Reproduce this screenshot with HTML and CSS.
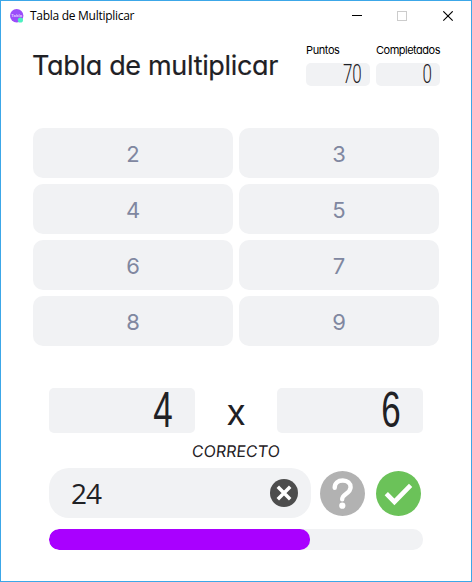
FILE: index.html
```html
<!DOCTYPE html>
<html lang="es">
<head>
<meta charset="utf-8">
<title>Tabla de Multiplicar</title>
<link rel="stylesheet" href="styles.css">
</head>
<body>
<div class="window">
  <header class="titlebar">
    <svg class="logo" width="14" height="14" viewBox="0 0 14 14"><circle cx="6.7" cy="6.8" r="6.7" fill="#9b4dfa"/><text x="6.7" y="7.8" class="logo-text" text-anchor="middle">Tabla</text><circle cx="10.4" cy="11" r="2.6" fill="#4df0c0"/></svg>
    <span class="caption">Tabla de Multiplicar</span>
    <svg class="controls" width="102" height="12" viewBox="0 0 102 12" fill="none"><path d="M0 4.500h10" stroke="#000"/><rect x="45.500" y=".5" width="9" height="9" stroke="#ccc"/><path d="M91.300.3l9.400 9.400m0-9.400l-9.400 9.400" stroke="#000" stroke-width="1.100"/></svg>
  </header>
  <main>
    <section class="heading">
      <h1>Tabla de multiplicar</h1>
      <div class="stat"><span class="label puntos">Puntos</span><div class="score"><span>70</span></div></div>
      <div class="stat"><span class="label">Completados</span><div class="score"><span>0</span></div></div>
    </section>
    <section class="tables">
      <button>2</button><button>3</button>
      <button>4</button><button>5</button>
      <button>6</button><button>7</button>
      <button>8</button><button>9</button>
    </section>
    <section class="game">
      <div class="operation">
        <div class="factor"><span>4</span></div>
        <span class="times">x</span>
        <div class="factor"><span>6</span></div>
      </div>
      <div class="result"><span>CORRECTO</span></div>
      <div class="answer">
        <div class="entry"><span>24</span>
          <svg width="28" height="28" viewBox="0 0 28 28"><circle cx="14" cy="14" r="14" fill="#4d4d4d"/><path d="M7.800 7.800l12.400 12.400m0-12.400l-12.400 12.400" stroke="#fff" stroke-width="3.500"/></svg>
        </div>
        <svg class="help" width="45" height="45" viewBox="0 0 45 45"><circle cx="22.500" cy="22.500" r="22.500" fill="#b2b2b2"/><path d="M14.700 16.800C14.700 12 18 9.500 22.800 9.500c4.800 0 7.800 3 7.800 6.800 0 6.400-8.400 6.400-8.400 12" fill="none" stroke="#fff" stroke-width="4.400" stroke-linecap="round"/><circle cx="22.300" cy="34.700" r="3.100" fill="#fff"/></svg>
        <svg class="check" width="45" height="45" viewBox="0 0 45 45"><circle cx="22.500" cy="22.500" r="22.500" fill="#6bc259"/><path d="M10.300 22.700l8.100 8.200 16.200-16.500" fill="none" stroke="#fff" stroke-width="4.600"/></svg>
      </div>
      <div class="progress"><div class="bar"></div></div>
    </section>
  </main>
</div>
</body>
</html>
```

FILE: styles.css
```css
* { box-sizing: border-box; }
body { margin: 0; background: #fff; color: #1f2125; font-family: Inter, "Open Sans", sans-serif; font-feature-settings: "cv11" 1; }
svg { display: block; flex: none; }
.window { width: 472px; height: 582px; border: 1px solid #3ca7e8; overflow: hidden; }
.titlebar { height: 29px; display: flex; align-items: center; padding: 0 17px 0 9px; }
.logo-text { font: 700 4px "Open Sans", sans-serif; fill: #e0c8ff; }
.caption { margin-left: 6px; font: 12px/16px "Open Sans", sans-serif; letter-spacing: -0.28px; color: #000; white-space: nowrap; }
.controls { margin-left: auto; margin-top: 2px; }
main { padding: 0 31px 0 32px; }
.heading { height: 98px; display: flex; gap: 6px; align-items: flex-start; }
h1 { flex: none; margin: 18px 0 0 -1px; width: 268px; font-size: 27px; line-height: 36px; font-weight: 400; letter-spacing: -0.32px; white-space: nowrap; -webkit-text-stroke: .2px #1f2125; }
.stat { flex: none; width: 64px; padding-top: 12px; }
.label { display: block; height: 21px; font-size: 11px; line-height: 16px; letter-spacing: -0.5px; color: #000; white-space: nowrap; }
.puntos { letter-spacing: -0.4px; }
.score { height: 23px; border-radius: 5px; background: #f1f2f4; display: flex; justify-content: flex-end; align-items: center; padding-right: 8px; font: 300 25px/23px Roboto, "Liberation Sans", sans-serif; }
.score span { transform: scaleX(.68); transform-origin: right; }
.tables { display: grid; grid-template-columns: 200px 200px; grid-auto-rows: 50px; gap: 6px; }
button { border: 0; border-radius: 10px; background: #f1f2f4; color: #8087a0; font: 22px/30px Inter, sans-serif; padding: 2px 0 0; }
.game { width: 374px; margin: 42px 0 0 16px; }
.operation { display: grid; grid-template-columns: 146px 82px 146px; grid-template-rows: 45px; height: 45px; }
.factor { border-radius: 5px; background: #f1f2f4; display: flex; justify-content: flex-end; align-items: center; padding-right: 22px; font: 50px/45px "Liberation Sans", sans-serif; }
.factor span { transform: scaleX(.7); transform-origin: right; }
.times { font-size: 36px; line-height: 48px; text-align: center; }
.result { height: 35px; text-align: center; font-size: 16px; line-height: 36px; }
.result span { display: inline-block; transform: skewX(-5deg); }
.answer { display: flex; height: 50px; align-items: center; }
.entry { width: 262px; height: 50px; border-radius: 20px; background: #f1f2f4; display: flex; align-items: center; justify-content: space-between; padding: 0 13px 0 22px; font: 28px/50px "Open Sans", sans-serif; letter-spacing: -1px; }
.help { margin-left: 9px; }
.check { margin-left: 11px; }
.progress { margin-top: 11px; height: 21px; border-radius: 10px; background: #f1f2f4; overflow: hidden; }
.bar { width: 261px; height: 21px; border-radius: 10px; background: #a900ff; }
```
